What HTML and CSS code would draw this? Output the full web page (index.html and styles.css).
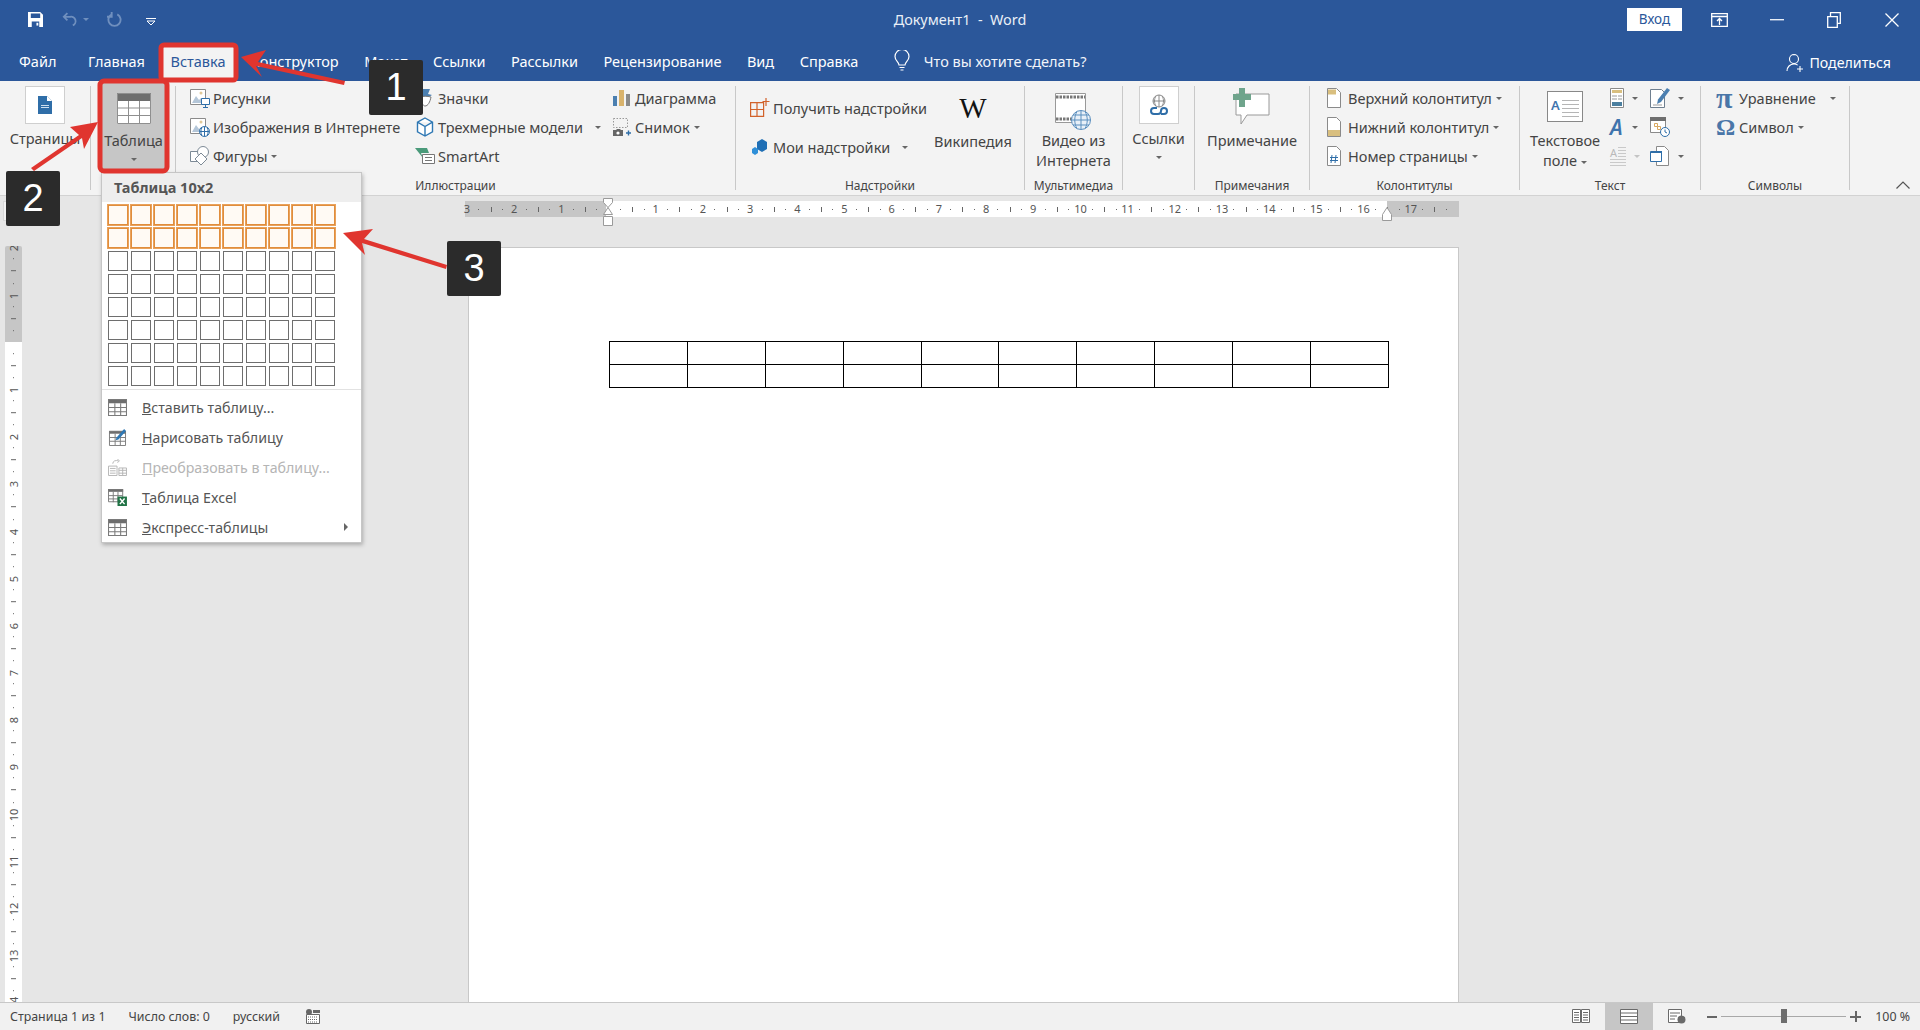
FILE: index.html
```html
<!DOCTYPE html>
<html lang="ru">
<head>
<meta charset="utf-8">
<title>Документ1 - Word</title>
<link rel="stylesheet" href="styles.css">
</head>
<body>
<div class="app">
  <header class="chrome">
    <div class="titlerow">
      <div class="qat">
        <svg class="ic-save" viewBox="0 0 16 16"><path fill="#fff" d="M0 0h13l3 3v13H0z"/><path fill="#2b579a" d="M3 1.500h10v5H3zM4 10h8v6H4z"/><path fill="#fff" d="M9 11.500h2v3H9z"/></svg>
        <svg class="ic-undo" viewBox="0 0 20 16"><path fill="none" stroke="#6f8fbe" stroke-width="2" d="M2 5h7a5 5 0 0 1 3 9.500M6 1 2 5l4 4"/></svg>
        <span class="dimcaret"></span>
        <svg class="ic-redo" viewBox="0 0 16 16"><path fill="none" stroke="#6f8fbe" stroke-width="2" d="M5 2.500a6.500 6.500 0 1 0 6 0M5 0v5H0"/></svg>
        <svg class="ic-custom" viewBox="0 0 10 8"><path fill="none" stroke="#fff" d="M0 .5h10M1 3l4 4 4-4z"/></svg>
      </div>
      <div class="doctitle">Документ1&nbsp; - &nbsp;Word</div>
      <div class="winctl">
        <span class="login">Вход</span>
        <svg class="ic-disp" viewBox="0 0 17 14"><path fill="none" stroke="#fff" stroke-width="1.300" d="M.7.700h15.600v12.600H.7zM.7 3.500h15.600M8.500 12V6M6 8l2.500-2.500L11 8"/></svg>
        <svg class="ic-min" viewBox="0 0 14 2"><path fill="#e8eef6" d="M0 0h14v1.400H0z"/></svg>
        <svg class="ic-rest" viewBox="0 0 14 16"><path fill="none" stroke="#fff" stroke-width="1.300" d="M.7 4.700h9.600v10.600H.7zM3.500 4.500V.7h9.800v10.600h-3"/></svg>
        <svg class="ic-close" viewBox="0 0 14 14"><path fill="none" stroke="#fff" stroke-width="1.300" d="m.5.500 13 13M13.500.500l-13 13"/></svg>
      </div>
    </div>
    <nav class="tabs">
      <span class="tab tab-file">Файл</span>
      <span class="tab">Главная</span>
      <span class="tab active">Вставка</span>
      <span class="tab">Конструктор</span>
      <span class="tab">Макет</span>
      <span class="tab">Ссылки</span>
      <span class="tab">Рассылки</span>
      <span class="tab">Рецензирование</span>
      <span class="tab">Вид</span>
      <span class="tab">Справка</span>
      <svg class="ic-bulb" viewBox="0 0 16 22"><path fill="none" stroke="#fff" stroke-width="1.200" d="M5 15c0-3-4-4-4-8.500a7 7 0 0 1 14 0C15 11 11 12 11 15zM5.500 17.500h5M6.500 20h3"/></svg>
      <span class="tab tell">Что вы хотите сделать?</span>
      <span class="share">
        <svg class="ic-person" viewBox="0 0 18 20"><path fill="none" stroke="#fff" stroke-width="1.100" d="M8 1.500a4.500 4.500 0 0 1 0 9 4.500 4.500 0 0 1 0-9zM1 18c0-4 3-7 7-7 1.500 0 2.700.4 3.700 1.100M11 16h6M14 13v6"/></svg>
        Поделиться
      </span>
    </nav>
  </header>

  <section class="ribbon">
    <div class="group g-pages">
      <div class="body center">
        <span class="whitebox">
          <svg class="ic-page" viewBox="0 0 14 18"><path fill="#2f6ea8" d="M0 0h9l5 5v13H0z"/><path fill="#fff" d="M9 0l5 5H9z"/><path fill="#cfe0ef" d="M3 9h8v1H3zM3 11h8v1H3z"/></svg>
        </span>
        <span class="biglabel mt4">Страницы</span>
      </div>
    </div>

    <div class="group g-table">
      <div class="tablebtn">
        <svg class="ic-table" viewBox="0 0 34 31"><path fill="#fff" d="M0 0h34v31H0z"/><path fill="#6e6e6e" d="M0 0h34v8H0z"/><path fill="none" stroke="#8f8f8f" d="M.5.500h33v30H.500zM.5 15h33M.5 22.500h33M11.500 8v22M22.500 8v22"/></svg>
        <span class="biglabel">Таблица</span>
        <span class="caret"></span>
      </div>
    </div>

    <div class="group g-illus">
      <div class="body row">
        <div class="col c1">
          <div class="item"><svg class="ic" viewBox="0 0 20 20"><path fill="#fff" stroke="#8a8a8a" d="M.5 1.500h15v15H.500z"/><path fill="#b4c6d8" d="M2 15l4-7 3 4 2-2 4 5z"/><circle cx="11" cy="5" r="1.500" fill="#e0c898"/><path fill="#fff" stroke="#2f6ea8" d="M11.500 10.500h8v6h-8z"/><path stroke="#2f6ea8" d="M15.500 16.500v3M13 19.500h5"/></svg>Рисунки</div>
          <div class="item"><svg class="ic" viewBox="0 0 20 20"><path fill="#fff" stroke="#8a8a8a" d="M.5 1.500h15v15H.500z"/><path fill="#b4c6d8" d="M2 15l4-7 3 4 2-2 4 5z"/><circle cx="11" cy="5" r="1.500" fill="#e0c898"/><circle cx="14.500" cy="14.500" r="5" fill="#fff" stroke="#2f6ea8"/><path fill="none" stroke="#2f6ea8" d="M9.500 14.500h10M14.500 9.500v10M12 10.500c-1.500 2.500-1.500 5.500 0 8M17 10.500c1.500 2.500 1.500 5.500 0 8"/></svg>Изображения в Интернете</div>
          <div class="item"><svg class="ic" viewBox="0 0 20 20"><path fill="#fff" stroke="#7d8a96" d="M.5 5.500h10v10H.5z"/><circle cx="13" cy="6" r="5.500" fill="#fff" stroke="#7d8a96"/><path fill="#fff" stroke="#7d8a96" d="M11 7l6 6-6 6-6-6z"/></svg>Фигуры<span class="caret il"></span></div>
        </div>
        <div class="col c2">
          <div class="item"><svg class="ic" viewBox="0 0 20 20"><path fill="#4b7fb0" d="M7 1h8l-2 5 4 1-5 3H7z"/><path fill="#fff" stroke="#777" d="M5 9c3-1 7-1 11 0-1 5-3 9-6 9-2 0-4-4-5-9z"/></svg>Значки</div>
          <div class="item"><svg class="ic" viewBox="0 0 20 20"><path fill="#fff" stroke="#2f78b4" stroke-width="1.400" d="M10 1l7.500 4.200v9.600L10 19l-7.500-4.200V5.200zM2.500 5.200 10 9.500l7.500-4.300M10 9.500V19"/></svg>Трехмерные модели<span class="caret il ml12"></span></div>
          <div class="item"><svg class="ic" viewBox="0 0 20 20"><path fill="#4a9a7a" d="M0 2h12l2 5H6l2 5z"/><path fill="#fff" stroke="#777" d="M7.500 8.500h12v9h-12z"/><path stroke="#777" d="M10 11.500h7M10 14.500h7"/></svg>SmartArt</div>
        </div>
        <div class="col c3">
          <div class="item"><svg class="ic" viewBox="0 0 20 20"><path fill="#4b7fb0" d="M1 8h4v10H1z"/><path fill="#d9b36c" d="M7 2h5v16H7z"/><path fill="#8a8a8a" d="M14 6h4v12h-4z"/></svg>Диаграмма</div>
          <div class="item"><svg class="ic" viewBox="0 0 20 20"><path fill="none" stroke="#999" stroke-dasharray="1.500 1.500" d="M1.500 1.500h14v9h-14z"/><path fill="#666" d="M1 13h3l1-1h3l1 1h2v6H1z"/><circle cx="6" cy="16" r="1.600" fill="#fff"/><path stroke="#2f6ea8" stroke-width="1.400" d="M14 16h5M16.500 13.500v5"/></svg>Снимок<span class="caret il"></span></div>
        </div>
      </div>
      <div class="glabel">Иллюстрации</div>
    </div>

    <div class="group g-addins">
      <div class="body row">
        <div class="col two">
          <div class="item"><svg class="ic" viewBox="0 0 20 20"><path fill="none" stroke="#d2622a" stroke-width="1.200" d="M.6 4.600h13v13.800H.6zM.6 11.500h13M7 4.600v13.800"/><path stroke="#d2622a" stroke-width="1.200" d="M16 0v8M12.500 3.500h7"/></svg>Получить надстройки</div>
          <div class="item"><svg class="ic" viewBox="0 0 20 20"><path fill="#1f6fb5" d="M7 5l5-3 5 3v7l-5 3-5-3z"/><path fill="#2f8fd8" d="M2 12l3-2 3 2v4l-3 2-3-2z"/></svg>Мои надстройки<span class="caret il ml12"></span></div>
        </div>
        <div class="bigitem wiki"><span class="wglyph">W</span><span class="biglabel">Википедия</span></div>
      </div>
      <div class="glabel">Надстройки</div>
    </div>

    <div class="group g-media">
      <div class="body center">
        <svg class="ic-video" viewBox="0 0 38 37"><path fill="#fff" stroke="#999" d="M.5.500h30v29H.5z"/><path fill="none" stroke="#777" stroke-width="3" stroke-dasharray="2.500 1" d="M1 4h29M1 26h16"/><circle cx="26" cy="27" r="9.500" fill="#e8f0f8" stroke="#5b8fbe"/><path fill="none" stroke="#5b8fbe" d="M16.500 27h19M26 17.500v19M22 18.500c-3 5-3 12 0 17M30 18.500c3 5 3 12 0 17M18 22h16M18 32h16"/></svg>
        <span class="biglabel">Видео из<br>Интернета</span>
      </div>
      <div class="glabel">Мультимедиа</div>
    </div>

    <div class="group g-links">
      <div class="body center">
        <span class="whitebox">
          <svg class="ic-link" viewBox="0 0 20 22"><circle cx="10" cy="7" r="6" fill="none" stroke="#8a8a8a"/><path fill="none" stroke="#8a8a8a" d="M4 7h12M10 1v12M7 2c-2 3-2 7 0 10M13 2c2 3 2 7 0 10"/><path fill="none" stroke="#2f6ea8" stroke-width="2" d="M8 14H5a3 3 0 0 0 0 6h4a3 3 0 0 0 3-3M12 17a3 3 0 0 1 3-3h0a3 3 0 0 1 0 6h-3"/></svg>
        </span>
        <span class="biglabel mt4">Ссылки</span>
        <span class="caret mt8"></span>
      </div>
    </div>

    <div class="group g-comment">
      <div class="body center">
        <svg class="ic-comment" viewBox="0 0 38 37"><path fill="#fff" stroke="#999" d="M3 6h33v21H14l-6 9v-9H3z"/><path fill="#6fa48c" d="M6 0h6v6h6v6h-6v7H6v-7H0V6h6z"/></svg>
        <span class="biglabel mt5">Примечание</span>
      </div>
      <div class="glabel">Примечания</div>
    </div>

    <div class="group g-hf">
      <div class="body">
        <div class="col c1">
          <div class="item"><svg class="ic hf" viewBox="0 0 16 20"><path fill="#fff" stroke="#8a8a8a" d="M1.500.500h9l4 4v15h-13z"/><path fill="#d9bf7f" d="M2 1.500h8v5H2z"/></svg>Верхний колонтитул<span class="caret il"></span></div>
          <div class="item"><svg class="ic hf" viewBox="0 0 16 20"><path fill="#fff" stroke="#8a8a8a" d="M1.500.500h9l4 4v15h-13z"/><path fill="#d9bf7f" d="M2 13h12v6H2z"/></svg>Нижний колонтитул<span class="caret il"></span></div>
          <div class="item"><svg class="ic hf" viewBox="0 0 16 20"><path fill="#fff" stroke="#8a8a8a" d="M1.500.500h9l4 4v15h-13z"/><path fill="none" stroke="#2f6ea8" d="M6 9l-1 8M10 9l-1 8M4 11.500h8M4 14.500h8"/></svg>Номер страницы<span class="caret il"></span></div>
        </div>
      </div>
      <div class="glabel">Колонтитулы</div>
    </div>

    <div class="group g-text">
      <div class="body row">
        <div class="bigitem tbox">
          <span class="tboxicon"><span class="tboxa">A</span><span class="tboxlines"></span></span>
          <span class="biglabel">Текстовое<br>поле<span class="caret il"></span></span>
        </div>
        <div class="tools">
          <span class="tool"><svg class="ic14" viewBox="0 0 14 20"><path fill="#fff" stroke="#8a8a8a" d="M.5.500h13v19H.500z"/><path fill="#d9bf7f" d="M2 2h10v3H2z"/><path fill="#4b7f9f" d="M2 14h10v4H2z"/><path stroke="#999" d="M2 8h5M2 11h5M8 8h4M8 11h4"/></svg><span class="caret"></span></span>
          <span class="tool"><svg class="ic18" viewBox="0 0 20 20"><path fill="#fff" stroke="#6f7f8f" d="M.5 1.500h11l3 3v15h-14z"/><path stroke="#999" d="M3 17h9"/><path fill="#4b7fb0" d="M17 0l3 2-9 12-4 2 1-4.500z"/></svg><span class="caret"></span></span>
          <span class="tool"><span class="wa">A</span><span class="caret"></span></span>
          <span class="tool"><svg class="ic18" viewBox="0 0 20 20"><path fill="#fff" stroke="#8a8a8a" d="M.5.500h15v15H.500z"/><path fill="#6e6e6e" d="M0 0h16v4H0z"/><path fill="none" stroke="#d9a860" d="M4.500 6.500h3v3h-3zM7.500 9.500h3v3h-3z"/><circle cx="15" cy="15" r="4.500" fill="#fff" stroke="#2f6ea8"/><path fill="none" stroke="#2f6ea8" d="M15 12.500V15l2 1"/></svg></span>
          <span class="tool dim"><span class="da">A</span><span class="caret"></span></span>
          <span class="tool"><svg class="ic18" viewBox="0 0 20 20"><path fill="#fff" stroke="#8a8a8a" d="M6.500.500h8l4 4v15h-12z"/><path fill="#fff" stroke="#2f6ea8" d="M.5 5.500h11v10H.500z"/><path fill="#2f6ea8" d="M1 5h11v2H1z"/></svg><span class="caret"></span></span>
        </div>
      </div>
      <div class="glabel">Текст</div>
    </div>

    <div class="group g-sym">
      <div class="body">
        <div class="col c1">
          <div class="item"><span class="symglyph pi">π</span>Уравнение<span class="caret il ml14"></span></div>
          <div class="item"><span class="symglyph">Ω</span>Символ<span class="caret il"></span></div>
        </div>
      </div>
      <div class="glabel">Символы</div>
    </div>

    <div class="collapse"><svg class="ic-chev" viewBox="0 0 14 8"><path fill="none" stroke="#555" stroke-width="1.200" d="m.5 7.500 6.500-6.500 6.500 6.500"/></svg></div>
  </section>

  <main class="work">
    <span class="tabsel"></span>
    <div class="hruler">
      <div class="hticks">
        <span class="hc">3</span><span class="hc">2</span><span class="hc">1</span><span class="hc"></span><span class="hc">1</span><span class="hc">2</span><span class="hc">3</span><span class="hc">4</span><span class="hc">5</span><span class="hc">6</span><span class="hc">7</span><span class="hc">8</span><span class="hc">9</span><span class="hc">10</span><span class="hc">11</span><span class="hc">12</span><span class="hc">13</span><span class="hc">14</span><span class="hc">15</span><span class="hc">16</span><span class="hc">17</span><span class="hc"></span>
      </div>
      <svg class="m-left" viewBox="0 0 12 28"><path fill="#fff" stroke="#9a9a9a" d="M1.500.500h9v4l-4.500 5-4.500-5zM6 9.500l4.500 7H1.500zM1.500 18.500h9v9h-9z"/></svg>
      <svg class="m-right" viewBox="0 0 12 14"><path fill="#fff" stroke="#9a9a9a" d="M6 .5l4.500 7v6h-9v-6z"/></svg>
    </div>
    <div class="docrow">
      <div class="vruler">
        <span class="vc">2</span><span class="vc">1</span><span class="vc"></span><span class="vc">1</span><span class="vc">2</span><span class="vc">3</span><span class="vc">4</span><span class="vc">5</span><span class="vc">6</span><span class="vc">7</span><span class="vc">8</span><span class="vc">9</span><span class="vc">10</span><span class="vc">11</span><span class="vc">12</span><span class="vc">13</span><span class="vc">14</span>
      </div>
      <div class="page">
        <table class="doctable">
          <tr><td></td><td></td><td></td><td></td><td></td><td></td><td></td><td></td><td></td><td></td></tr>
          <tr><td></td><td></td><td></td><td></td><td></td><td></td><td></td><td></td><td></td><td></td></tr>
        </table>
      </div>
    </div>
  </main>

  <footer class="status">
    <span class="st s1">Страница 1 из 1</span>
    <span class="st s2">Число слов: 0</span>
    <span class="st s3">русский</span>
    <svg class="ic-macro" viewBox="0 0 16 15"><circle cx="4" cy="3" r="3" fill="#666"/><path fill="#666" d="M8 1h7v3H8z"/><path fill="#fff" stroke="#666" d="M1.500 5.500h13v9h-13z"/><path stroke="#666" stroke-dasharray="1 1" d="M3 8h10M3 10.500h10M3 13h10"/></svg>
    <div class="views">
      <span class="view"><svg class="ic-view" viewBox="0 0 18 15"><path fill="#fff" stroke="#6a6a6a" d="M.5.500h8v13h-8zM9.500.500h8v13h-8z"/><path stroke="#6a6a6a" d="M2 3.500h5M2 6h5M2 8.500h5M2 11h5M11 3.500h5M11 6h5M11 8.500h5M11 11h5"/></svg></span>
      <span class="view on"><svg class="ic-view" viewBox="0 0 18 15"><path fill="#fff" stroke="#6a6a6a" d="M.5.500h17v14H.500z"/><path stroke="#6a6a6a" d="M.5 4h17M.5 7.500h17M.5 11h17"/></svg></span>
      <span class="view"><svg class="ic-view" viewBox="0 0 18 15"><path fill="#fff" stroke="#6a6a6a" d="M.5.500h13v13H.500z"/><path stroke="#6a6a6a" d="M2 4h10M2 7h7M2 10h5"/><circle cx="13.500" cy="10.500" r="4" fill="#6a6a6a"/></svg></span>
    </div>
    <div class="zoomer">
      <span class="zminus"></span>
      <span class="ztrack"><span class="zthumb"></span></span>
      <span class="zplus"></span>
    </div>
    <span class="st zpct">100 %</span>
  </footer>

  <div class="tablemenu">
    <div class="tm-head">Таблица 10х2</div>
    <div class="tm-grid">
      <i class="o"></i><i class="o"></i><i class="o"></i><i class="o"></i><i class="o"></i><i class="o"></i><i class="o"></i><i class="o"></i><i class="o"></i><i class="o"></i>
      <i class="o"></i><i class="o"></i><i class="o"></i><i class="o"></i><i class="o"></i><i class="o"></i><i class="o"></i><i class="o"></i><i class="o"></i><i class="o"></i>
      <i></i><i></i><i></i><i></i><i></i><i></i><i></i><i></i><i></i><i></i>
      <i></i><i></i><i></i><i></i><i></i><i></i><i></i><i></i><i></i><i></i>
      <i></i><i></i><i></i><i></i><i></i><i></i><i></i><i></i><i></i><i></i>
      <i></i><i></i><i></i><i></i><i></i><i></i><i></i><i></i><i></i><i></i>
      <i></i><i></i><i></i><i></i><i></i><i></i><i></i><i></i><i></i><i></i>
      <i></i><i></i><i></i><i></i><i></i><i></i><i></i><i></i><i></i><i></i>
    </div>
    <div class="tm-sep"></div>
    <div class="tm-item"><svg class="tm-ic" viewBox="0 0 18 16"><path fill="#fff" d="M0 0h18v16H0z"/><path fill="#6e6e6e" d="M0 0h18v4H0z"/><path fill="none" stroke="#7a7a7a" d="M.5.500h17v15H.500zM.5 8h17M.5 12h17M6.500 4v12M12 4v12"/></svg><span><u>В</u>ставить таблицу...</span></div>
    <div class="tm-item"><svg class="tm-ic" viewBox="0 0 18 18"><path fill="#fff" d="M0 2h18v16H0z"/><path fill="#6e6e6e" d="M0 2h18v3H0z"/><path fill="none" stroke="#7a7a7a" d="M.5 2.500h17v15H.500zM.5 9h17M.5 13h17M6.500 5v12M12 5v12"/><path fill="#2f78b4" d="M16 0l2 2-8 9-3 1 1-3z"/></svg><span><u>Н</u>арисовать таблицу</span></div>
    <div class="tm-item off"><svg class="tm-ic" viewBox="0 0 20 18"><path fill="none" stroke="#b5b5b5" d="M.5 7.500h9v10h-9zM2 10h6M2 12.500h6M2 15h6M11.500 9.500h8v8h-8zM11.500 12h8M11.500 15h8M15.500 9.500v8M5 5c0-3 3-4 6-3M10 0l2 2-2 2"/></svg><span><u>П</u>реобразовать в таблицу...</span></div>
    <div class="tm-item"><svg class="tm-ic" viewBox="0 0 20 18"><path fill="#fff" d="M0 0h16v14H0z"/><path fill="#6e6e6e" d="M0 0h16v3H0z"/><path fill="none" stroke="#7a7a7a" d="M.5.500h15v13H.500zM.5 7h15M.5 10.500h15M5.500 3v11M10.500 3v11"/><path fill="#217346" d="M10 8h10v10H10z"/><path fill="none" stroke="#fff" stroke-width="1.500" d="m12.500 10 5 6M17.500 10l-5 6"/></svg><span><u>Т</u>аблица Excel</span></div>
    <div class="tm-item"><svg class="tm-ic" viewBox="0 0 18 16"><path fill="#fff" d="M0 0h18v16H0z"/><path fill="#6e6e6e" d="M0 0h18v4H0z"/><path fill="none" stroke="#7a7a7a" d="M.5.500h17v15H.500zM.5 8h17M.5 12h17M6.500 4v12M12 4v12"/></svg><span><u>Э</u>кспресс-таблицы</span><span class="tm-arrow"></span></div>
  </div>

  <svg class="marks" viewBox="0 0 1920 1030">
    <rect class="hl" x="161" y="45" width="75" height="35" rx="3"/>
    <rect class="hl" x="100" y="81" width="67" height="90" rx="4"/>
    <path class="ar" d="M241 57 266 50 258 62 345 81 344 85 256 66 262 77z"/>
    <path class="ar" d="M98 122 70 127 79 135 31 168 34 171 82 138 84 149z"/>
    <path class="ar" d="M343 233 373 229 364 239 447 265 446 269 362 243 365 255z"/>
  </svg>
  <div class="badge b1">1</div>
  <div class="badge b2">2</div>
  <div class="badge b3">3</div>
</div>
</body>
</html>
```
FILE: styles.css
```css
* { box-sizing: border-box; }
html, body { margin: 0; height: 100%; }
body { overflow: hidden; font-family: "Noto Sans", "Open Sans", sans-serif; font-size: 14.500px; color: #444; }
svg { display: block; flex: none; }

.app { position: relative; width: 1920px; height: 1030px; display: flex; flex-direction: column; overflow: hidden; background: #e6e6e6; }

/* title + tabs */
.chrome { height: 81px; background: #2b579a; color: #fff; flex: none; }
.titlerow { height: 46px; display: grid; grid-template-columns: 1fr auto 1fr; align-items: start; }
.qat { display: flex; align-items: center; padding: 12px 0 0 28px; }
.ic-save { width: 15px; height: 15px; }
.ic-undo { width: 18px; height: 15px; margin-left: 19px; }
.dimcaret { width: 0; height: 0; border: 3px solid transparent; border-top-color: #6f8fbe; margin: 3px 0 0 3px; }
.ic-redo { width: 15px; height: 15px; margin-left: 18px; }
.ic-custom { width: 10px; height: 8px; margin: 5px 0 0 24px; }
.doctitle { padding-top: 10px; font-size: 14.400px; line-height: 20px; color: #e9eff7; }
.winctl { display: flex; align-items: center; justify-content: flex-end; height: 39px; padding-right: 21px; }
.login { width: 55px; height: 23px; background: #fff; color: #2b579a; text-align: center; font-size: 13.500px; line-height: 23px; margin-right: 29px; }
.ic-disp { width: 17px; height: 14px; margin-right: 42px; }
.ic-min { width: 14px; height: 2px; margin-right: 43px; }
.ic-rest { width: 14px; height: 16px; margin-right: 44px; }
.ic-close { width: 14px; height: 14px; }

.tabs { display: flex; align-items: flex-start; height: 35px; padding-left: 19px; gap: 25.500px; position: relative; }
.tab { font-size: 14.500px; line-height: 31px; white-space: nowrap; }
.tab-file { margin-right: 6px; }
.tab.active { background: #f3f3f3; color: #2b579a; margin: 0 -8px; padding: 0 8px; height: 35px; }
.ic-bulb { width: 16px; height: 22px; margin: 4px 0 0 10px; }
.tab.tell { margin-left: -11.500px; color: #f2f5fa; }
.share { margin-left: auto; padding: 7px 29px 0 0; display: flex; align-items: center; gap: 5px; font-size: 14.200px; line-height: 20px; }
.ic-person { width: 18px; height: 20px; }

/* ribbon */
.ribbon { flex: none; height: 115px; display: flex; padding-top: 5px; background: #f3f3f3; border-bottom: 1px solid #d2d2d2; }
.group { height: 104px; display: flex; flex-direction: column; border-right: 1px solid #c8c8c8; }
.body { flex: 1; min-height: 0; }
.body.row { display: flex; }
.body.center { display: flex; flex-direction: column; align-items: center; }
.glabel { height: 12px; margin-bottom: -2px; line-height: 12px; text-align: center; font-size: 12px; color: #444; white-space: nowrap; }
.g-pages { width: 91px; }
.g-table { width: 85px; }
.g-illus { width: 560px; }
.g-addins { width: 289px; }
.g-media { width: 98px; }
.g-links { width: 72px; }
.g-comment { width: 115px; }
.g-hf { width: 210px; }
.g-text { width: 181px; }
.g-sym { width: 149px; }
.collapse { flex: 1; display: flex; justify-content: flex-end; align-items: flex-end; padding: 0 10px 0 0; height: 104px; }
.ic-chev { width: 14px; height: 8px; margin-bottom: 1px; }

.col { display: flex; flex-direction: column; gap: 3px; margin-top: -1px; }
.col.two { padding: 10px 0 0 14px; gap: 13px; width: 199px; }
.c1 { width: 239px; padding-left: 14px; }
.g-hf .c1 { width: auto; padding-left: 16px; }
.g-sym .c1 { width: auto; padding-left: 15px; }
.c2 { width: 197px; }
.item { height: 26px; display: flex; align-items: center; white-space: nowrap; }
.ic { width: 20px; height: 20px; margin-right: 3px; }
.ic.hf { width: 16px; height: 20px; margin-right: 6px; }
.caret { display: block; flex: none; width: 0; height: 0; border: 3.500px solid transparent; border-top: 3.500px solid #666; border-bottom: 0; }
.caret.il { display: inline-block; margin-left: 4px; vertical-align: middle; }
.caret.ml12 { margin-left: 12px; }
.caret.ml14 { margin-left: 14px; }
.mt4 { margin-top: 4px; }
.mt5 { margin-top: 5px; }
.mt8 { margin-top: 8px; }

.whitebox { width: 40px; height: 38px; background: #fff; border: 1px solid #cfcfcf; display: flex; align-items: center; justify-content: center; }
.ic-page { width: 14px; height: 18px; }
.ic-link { width: 20px; height: 22px; }
.biglabel { font-size: 14.500px; line-height: 20px; text-align: center; white-space: nowrap; }

.tablebtn { width: 67px; height: 90px; margin: -4px 0 0 9px; background: #c6c6c6; display: flex; flex-direction: column; align-items: center; padding-top: 11px; }
.ic-table { width: 34px; height: 31px; margin-bottom: 6px; }
.tablebtn .caret { margin-top: 8px; }

.bigitem { display: flex; flex-direction: column; align-items: center; }
.wiki { width: 76px; }
.wglyph { font-family: "Liberation Serif", serif; font-size: 29px; line-height: 34px; height: 45px; padding-top: 5px; color: #111; }
.ic-video { width: 38px; height: 37px; margin: 7px 0 0; }
.ic-comment { width: 38px; height: 37px; margin-top: 2px; }
.tbox { width: 78px; margin-left: 10px; padding-top: 5px; }
.tboxicon { width: 36px; height: 31px; background: #fff; border: 1px solid #888; display: flex; gap: 2px; margin-bottom: 8px; padding: 6px 3px 0; }
.tboxa { color: #3f74ad; font-size: 13px; line-height: 14px; font-weight: 600; }
.tboxlines { flex: 1; height: 18px; background: repeating-linear-gradient(#b5b5b5 0 1px, transparent 1px 4px); margin-top: 2px; }
.tools { display: grid; grid-template-columns: 40px 50px; grid-auto-rows: 29px; margin: -1px 0 0 10px; }
.tool { display: flex; align-items: center; gap: 8px; height: 26px; }
.tool.dim .caret { border-top-color: #c4c4c4; }
.ic14 { width: 14px; height: 20px; }
.ic18 { width: 20px; height: 20px; }
.wa { font-family: "Noto Sans", sans-serif; font-style: italic; font-weight: 600; font-size: 21px; color: #3f74ad; width: 14px; line-height: 22px; }
.da { color: #b9b9b9; font-size: 11px; width: 16px; height: 19px; line-height: 12px;
  background: repeating-linear-gradient(#c9c9c9 0 1px, transparent 1px 3px) 100% 0 / 8px 10px no-repeat, repeating-linear-gradient(#c9c9c9 0 1px, transparent 1px 3px) 0 100% / 100% 7px no-repeat; }
.symglyph { font-family: "Liberation Serif", serif; font-size: 24px; line-height: 24px; width: 22px; color: #4a76a8; font-weight: 700; margin-right: 1px; }
.symglyph.pi { font-size: 30px; }

/* workspace */
.work { flex: 1; min-height: 0; display: flex; flex-direction: column; background: #e6e6e6; position: relative; }
.tabsel { position: absolute; left: 3px; top: 5px; width: 20px; height: 20px; background: #f3f3f3; border: 1px solid #d8d8d8; }
.hruler { position: relative; flex: none; width: 994px; height: 16px; margin: 5px 0 0 465px;
  background: linear-gradient(to right, #c6c6c6 141px, #fff 141px, #fff 922px, #c6c6c6 922px); }
.hticks { display: flex; height: 16px; margin-left: -21.600px; width: 1015px; overflow: hidden; clip-path: inset(0 0 0 17px); }
.hc { flex: none; width: 47.200px; height: 16px; text-align: center; font-size: 11px; line-height: 16px; color: #555;
  background: linear-gradient(#666, #666) 0 50% / 1px 5px no-repeat, linear-gradient(#666, #666) 11.500px 50% / 1px 1px no-repeat, linear-gradient(#666, #666) 35px 50% / 1px 1px no-repeat; }
.m-left { position: absolute; left: 137px; top: -3px; width: 12px; height: 28px; }
.m-right { position: absolute; left: 916px; top: 6px; width: 12px; height: 14px; }

.docrow { flex: 1; min-height: 0; display: flex; margin-top: 30px; }
.vruler { flex: none; width: 17px; margin: -1px 0 0 5px; overflow: hidden;
  background: linear-gradient(to bottom, #c6c6c6 96px, #fff 96px); padding-top: 2px; display: flex; flex-direction: column; height: 756px; border-radius: 2px 2px 0 0; }
.vc { flex: none; height: 47.200px; writing-mode: vertical-rl; transform: rotate(180deg); font-size: 11px; line-height: 17px; color: #555; text-align: center; position: relative; top: -23.600px;
  background: linear-gradient(#666, #666) 50% 0 / 5px 1px no-repeat, linear-gradient(#666, #666) 50% 11.500px / 1px 1px no-repeat, linear-gradient(#666, #666) 50% 35px / 1px 1px no-repeat; }
.page { flex: none; width: 991px; margin-left: 446px; background: #fff; border: 1px solid #c8c8c8; border-bottom: 0; padding: 93px 0 0 140px; }
.doctable { border-collapse: collapse; width: 780px; table-layout: fixed; }
.doctable td { border: 1px solid #000; height: 23px; padding: 0; }

/* status bar */
.status { flex: none; height: 28px; background: #f1f1f1; border-top: 1px solid #c8c8c8; display: flex; align-items: center; font-size: 12.400px; color: #444; position: relative; }
.st { white-space: nowrap; }
.s1 { margin-left: 10px; }
.s2 { margin-left: 23px; }
.s3 { margin-left: 23px; }
.ic-macro { width: 16px; height: 15px; margin-left: 25px; }
.views { display: flex; margin-left: auto; height: 27px; margin-right: 1px; }
.view { width: 48px; display: flex; align-items: center; justify-content: center; }
.view.on { background: #c6c6c6; }
.ic-view { width: 18px; height: 15px; }
.zoomer { display: flex; align-items: center; margin-left: 5px; }
.zminus { width: 10px; height: 2px; background: #666; }
.ztrack { position: relative; width: 125px; height: 1px; background: #a8a8a8; margin: 0 4px; }
.zthumb { position: absolute; left: 60px; top: -7px; width: 6px; height: 14px; background: #6e6e6e; }
.zplus { width: 11px; height: 11px; background: linear-gradient(#666, #666) 50% 50% / 11px 2px no-repeat, linear-gradient(#666, #666) 50% 50% / 2px 11px no-repeat; }
.zpct { margin: 0 10px 0 14px; }

/* dropdown */
.tablemenu { position: absolute; left: 101px; top: 172px; width: 261px; height: 371px; background: #fff; border: 1px solid #c6c6c6; box-shadow: 1px 2px 4px rgba(0,0,0,.25); }
.tm-head { height: 29px; background: #eeeeee; font-weight: 700; font-size: 14.500px; line-height: 28px; color: #555; padding-left: 12px; }
.tm-grid { display: grid; grid-template-columns: repeat(10, 20px); grid-auto-rows: 20px; gap: 3px; padding: 3px 0 0 6px; }
.tm-grid i { display: block; border: 1px solid #6e6e6e; background: #fff; }
.tm-grid i.o { border-color: #e08d3c; outline: 1px solid #e9a25c; background: #fffaf4; }
.tm-sep { height: 1px; background: #e2e2e2; margin-top: 3px; }
.tm-item { height: 30px; display: flex; align-items: center; font-size: 14.200px; color: #555; position: relative; padding-left: 6px; }
.tm-item.off { color: #b5b5b5; }
.tm-ic { width: 19px; height: 17px; margin-right: 15px; }
.tm-sep + .tm-item { margin-top: 2px; }
.tm-arrow { position: absolute; left: 242px; top: 11px; width: 0; height: 0; border: 4px solid transparent; border-left: 4px solid #666; border-right: 0; }

/* annotations */
.marks { position: absolute; left: 0; top: 0; width: 1920px; height: 1030px; pointer-events: none; }
.hl { fill: none; stroke: #e0352f; stroke-width: 5; }
.ar { fill: #e0352f; }
.badge { position: absolute; width: 54px; height: 55px; background: #2b2b2b; color: #fff; border-radius: 2px; font-family: "Liberation Sans", sans-serif; font-size: 38px; line-height: 55px; text-align: center; }
.b1 { left: 369px; top: 60px; }
.b2 { left: 6px; top: 171px; }
.b3 { left: 447px; top: 241px; }
```
